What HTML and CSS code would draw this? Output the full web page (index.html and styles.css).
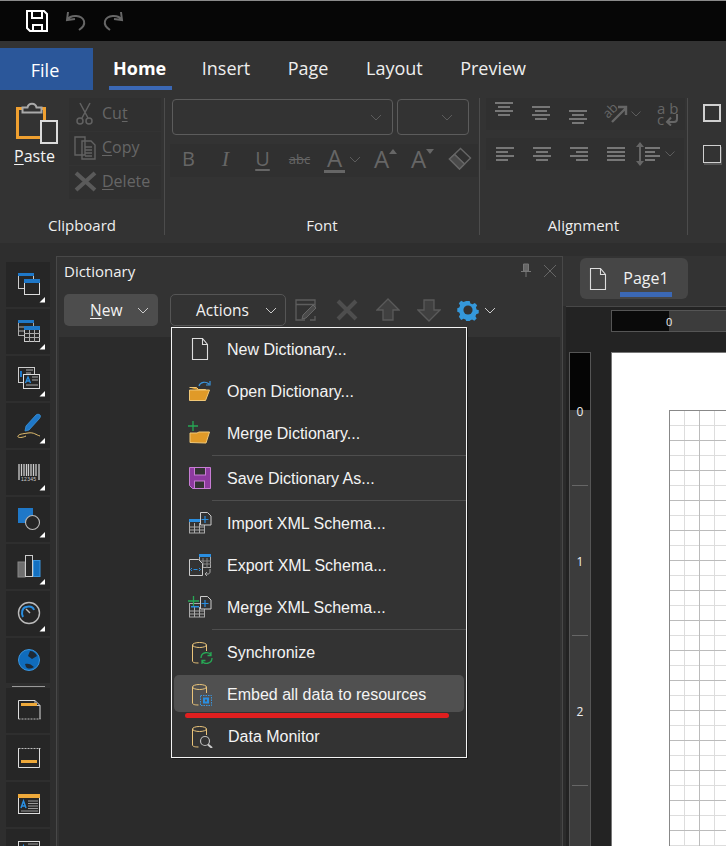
FILE: index.html
```html
<!DOCTYPE html>
<html lang="en">
<head>
<meta charset="utf-8">
<title>Dictionary Actions</title>
<link rel="stylesheet" href="styles.css">
</head>
<body>
<div class="app">
  <header class="titlebar">
    <svg width="130" height="40" viewBox="0 0 130 40" fill="none">
      <path d="M27 10h17l3 3v17H30l-3-3z" stroke="#fff" stroke-width="2"/>
      <path d="M32 10v7h10v-7M33 30v-6h9v6" stroke="#fff" stroke-width="2"/>
      <path d="M68 11l-1 8 8-1M67 19c4-6 15-5 17 1 1 4-1 6-5 9" stroke="#666" stroke-width="2"/>
      <path d="M121 11l1 8-8-1M122 19c-4-6-15-5-17 1-1 4 1 6 5 9" stroke="#666" stroke-width="2"/>
    </svg>
  </header>

  <nav class="tabs">
    <div class="tab-file">File</div>
    <div class="tab tab-active">Home</div>
    <div class="tab">Insert</div>
    <div class="tab">Page</div>
    <div class="tab">Layout</div>
    <div class="tab">Preview</div>
  </nav>

  <section class="ribbon">
    <div class="group group-clip">
      <div class="group-body clip-body">
        <div class="paste">
          <svg width="69" height="46" viewBox="0 0 69 46" fill="none">
            <path d="M17.5 9.5h27v29h-27z" stroke="#f0a030" stroke-width="3"/>
            <path d="M22.5 13.5v-5h5c1-5 8-5 9 0h5v5z" fill="#333" stroke="#aaa" stroke-width="2"/>
            <rect x="41" y="22" width="16" height="22" fill="#333" stroke="#ddd" stroke-width="2"/>
          </svg>
          <div class="paste-label"><u>P</u>aste</div>
        </div>
        <div class="clip-small">
          <div class="small-btn">
            <svg width="28" height="26" viewBox="0 0 28 26" fill="none" stroke="#626262" stroke-width="1.5"><path d="M9 3l8 15M19 3l-8 15"/><circle cx="9" cy="21" r="3"/><circle cx="18" cy="21" r="3"/></svg>
            <span>Cu<u>t</u></span>
          </div>
          <div class="small-btn">
            <svg width="28" height="26" viewBox="0 0 28 26" fill="none" stroke="#626262" stroke-width="1.4"><path d="M4 3h10v18H4zM11 7h9l4 4v14H11zM14 13h7M14 16h7M14 19h7M14 22h7"/></svg>
            <span><u>C</u>opy</span>
          </div>
          <div class="small-btn">
            <svg width="28" height="26" viewBox="0 0 28 26" fill="none" stroke="#5a5a5a" stroke-width="4"><path d="M5 5l19 17M24 5L5 22"/></svg>
            <span><u>D</u>elete</span>
          </div>
        </div>
      </div>
      <div class="group-label">Clipboard</div>
    </div>

    <div class="group group-font">
      <div class="group-body font-body">
        <div class="combos">
          <div class="combo combo-wide"><svg width="12" height="7" viewBox="0 0 12 7" fill="none" stroke="#5c5c5c"><path d="M1 1l5 5 5-5"/></svg></div>
          <div class="combo combo-narrow"><svg width="12" height="7" viewBox="0 0 12 7" fill="none" stroke="#5c5c5c"><path d="M1 1l5 5 5-5"/></svg></div>
        </div>
        <div class="font-row">
          <div class="font-btn fb-b">B</div>
          <div class="font-btn fb-i">I</div>
          <div class="font-btn fb-u">U</div>
          <div class="font-btn fb-s">abc</div>
          <div class="font-btn fb-color"><span class="color-a">A</span><svg width="12" height="7" viewBox="0 0 12 7" fill="none" stroke="#5c5c5c"><path d="M1 1l5 5 5-5"/></svg></div>
          <div class="font-btn fb-grow">A<svg width="8" height="5" viewBox="0 0 8 5"><path d="M0 5l4-5 4 5z" fill="#666"/></svg></div>
          <div class="font-btn fb-grow">A<svg width="8" height="5" viewBox="0 0 8 5"><path d="M0 0l4 5 4-5z" fill="#666"/></svg></div>
          <div class="font-btn">
            <svg width="24" height="24" viewBox="0 0 24 24" fill="none" stroke="#666" stroke-width="1.4"><path d="M1.500 12L12.500 1.500 22.500 11 11.500 22z"/><path d="M6.500 7.500l10 9.500" /><path d="M1.500 12l5-4.500 10 9.500-5 5z" fill="#4a4a4a"/></svg>
          </div>
        </div>
      </div>
      <div class="group-label">Font</div>
    </div>

    <div class="group group-align">
      <div class="group-body align-body">
        <div class="align-row">
          <div class="align-btn"><svg width="37" height="32" viewBox="0 0 37 32" fill="#777"><rect x="9" y="4" width="18" height="2"/><rect x="12" y="8" width="12" height="2"/><rect x="9" y="12" width="18" height="2"/><rect x="12" y="16" width="12" height="2"/></svg></div>
          <div class="align-btn"><svg width="37" height="32" viewBox="0 0 37 32" fill="#777"><rect x="9" y="8" width="18" height="2"/><rect x="12" y="12" width="12" height="2"/><rect x="9" y="16" width="18" height="2"/><rect x="12" y="20" width="12" height="2"/></svg></div>
          <div class="align-btn"><svg width="37" height="32" viewBox="0 0 37 32" fill="#777"><rect x="9" y="12" width="18" height="2"/><rect x="12" y="16" width="12" height="2"/><rect x="9" y="20" width="18" height="2"/><rect x="12" y="24" width="12" height="2"/></svg></div>
          <div class="align-btn align-orient">
            <svg width="37" height="32" viewBox="0 0 37 32" fill="none">
              <text transform="translate(11 21) rotate(-45)" class="orient-text">ab</text>
              <path d="M15 24L29 10M21 9h8v8" stroke="#666" stroke-width="2.400"/>
            </svg>
            <svg width="10" height="6" viewBox="0 0 10 6" fill="none" stroke="#5c5c5c"><path d="M.5.500l4.500 4.500 4.500-4.500"/></svg>
          </div>
          <div class="align-wrap">
            <span class="wrap-top">ab</span>
            <span class="wrap-bot">c
              <svg width="14" height="12" viewBox="0 0 14 12" fill="none" stroke="#666" stroke-width="2"><path d="M12 0v5c0 2-1 3-3 3H2M6 3.500L2 8l4 3.500"/></svg>
            </span>
          </div>
        </div>
        <div class="align-row align-row-2">
          <div class="align-btn"><svg width="37" height="32" viewBox="0 0 37 32" fill="#777"><rect x="10" y="9" width="18" height="2"/><rect x="10" y="13" width="12" height="2"/><rect x="10" y="17" width="18" height="2"/><rect x="10" y="21" width="12" height="2"/></svg></div>
          <div class="align-btn"><svg width="37" height="32" viewBox="0 0 37 32" fill="#777"><rect x="10" y="9" width="18" height="2"/><rect x="13" y="13" width="12" height="2"/><rect x="10" y="17" width="18" height="2"/><rect x="13" y="21" width="12" height="2"/></svg></div>
          <div class="align-btn"><svg width="37" height="32" viewBox="0 0 37 32" fill="#777"><rect x="10" y="9" width="18" height="2"/><rect x="16" y="13" width="12" height="2"/><rect x="10" y="17" width="18" height="2"/><rect x="16" y="21" width="12" height="2"/></svg></div>
          <div class="align-btn"><svg width="37" height="32" viewBox="0 0 37 32" fill="#777"><rect x="10" y="9" width="18" height="2"/><rect x="10" y="13" width="18" height="2"/><rect x="10" y="17" width="18" height="2"/><rect x="10" y="21" width="18" height="2"/></svg></div>
          <div class="align-spacing">
            <svg width="28" height="32" viewBox="0 0 28 32" fill="none"><path d="M6 5v22" stroke="#666" stroke-width="2"/><path d="M2 9l4-5 4 5zM2 23l4 5 4-5z" fill="#666"/><path d="M11 10h15M11 14h10M11 18h15M11 22h10" stroke="#777" stroke-width="2"/></svg>
            <svg width="10" height="6" viewBox="0 0 10 6" fill="none" stroke="#5c5c5c"><path d="M.5.500l4.500 4.500 4.500-4.500"/></svg>
          </div>
        </div>
      </div>
      <div class="group-label">Alignment</div>
    </div>

    <div class="group group-last">
      <div class="check check-thick"></div>
      <div class="check check-thin"></div>
    </div>
  </section>

  <main class="workspace">
    <aside class="toolbox">
      <div class="tool"><svg width="44" height="45" viewBox="0 0 44 45" fill="none"><rect x="12.500" y="11.500" width="15" height="15" stroke="#ccc"/><rect x="12" y="11" width="16" height="3" fill="#1f78c8"/><rect x="18.500" y="17.500" width="15" height="15" fill="#262626" stroke="#ddd"/><rect x="18" y="17" width="16" height="4" fill="#1f78c8"/><path d="M33.500 40.500H39V35z" fill="#fff"/></svg></div>
      <div class="tool"><svg width="44" height="45" viewBox="0 0 44 45" fill="none"><rect x="12.500" y="11.500" width="15" height="15" stroke="#aaa"/><rect x="12" y="11" width="16" height="3" fill="#1f78c8"/><path d="M12 18h6M12 22h6" stroke="#aaa"/><rect x="18.500" y="17.500" width="15" height="15" fill="#262626" stroke="#ccc"/><rect x="18" y="17" width="16" height="4" fill="#1f78c8"/><path d="M23.500 21v12M28.500 21v12M18 24.500h16M18 28.500h16" stroke="#aaa"/><path d="M33.500 40.500H39V35z" fill="#fff"/></svg></div>
      <div class="tool"><svg width="44" height="45" viewBox="0 0 44 45" fill="none"><rect x="12.500" y="11.500" width="16" height="15" stroke="#ccc"/><rect x="17.500" y="18.500" width="16" height="14" fill="#262626" stroke="#ddd"/><path d="M15 15v6" stroke="#1f78c8" stroke-width="2"/><path d="M19.500 27l2.500-6 2.500 6M20.500 25h3" stroke="#2a8ee0" stroke-width="1.300"/><path d="M20 14h7M20 17h5M26 21h6M26 24h6M20 29h12" stroke="#aaa"/><path d="M33.500 40.500H39V35z" fill="#fff"/></svg></div>
      <div class="tool"><svg width="44" height="45" viewBox="0 0 44 45" fill="none"><path d="M19 28l1-5 10-11c1-1 3-1 4 0s0 3-1 4L23 27z" fill="#1f78c8" stroke="#3a94dc" stroke-width=".8"/><path d="M34 33c-4-1-6-4-12-3s-9 1-10 3 4 2 8 0" stroke="#e4c070" stroke-width="1"/><path d="M33.500 40.500H39V35z" fill="#fff"/></svg></div>
      <div class="tool"><svg width="44" height="45" viewBox="0 0 44 45" fill="none"><path d="M13 14v16M15.500 14v12M18 14v12M20.500 14v12M22.500 14v12M25 14v12M27.500 14v12M30 14v12M33 14v16" stroke="#ccc" stroke-width="1.300"/><text x="15" y="31" class="bar-digits">12345</text><path d="M33.500 40.500H39V35z" fill="#fff"/></svg></div>
      <div class="tool"><svg width="44" height="45" viewBox="0 0 44 45" fill="none"><rect x="12" y="11" width="15" height="15" fill="#1f78c8"/><circle cx="26.500" cy="25.500" r="7" fill="#262626" stroke="#bbb" stroke-width="1.100"/><path d="M33.500 40.500H39V35z" fill="#fff"/></svg></div>
      <div class="tool"><svg width="44" height="45" viewBox="0 0 44 45" fill="none"><rect x="12" y="18" width="7" height="15" fill="#6e6e6e" stroke="#888"/><rect x="19.500" y="11.500" width="7" height="21" stroke="#ccc"/><rect x="27.500" y="16.500" width="6.500" height="16" fill="#1470c0" stroke="#3a94dc"/><path d="M33.500 40.500H39V35z" fill="#fff"/></svg></div>
      <div class="tool"><svg width="44" height="45" viewBox="0 0 44 45" fill="none"><circle cx="23" cy="22" r="10.500" stroke="#bbb" stroke-width="1.400"/><path d="M17 26c-2-4-1-9 3-10s7 0 8 3" stroke="#2a8ee0" stroke-width="2"/><path d="M20 18l4 4" stroke="#bbb" stroke-width="1.400"/><path d="M33.500 40.500H39V35z" fill="#fff"/></svg></div>
      <div class="tool"><svg width="44" height="45" viewBox="0 0 44 45" fill="none"><circle cx="23" cy="22" r="10.500" fill="#0f6cbd" stroke="#3a94dc"/><path d="M24 13c3 0 6 2 7 5l-5 3-4-3zM19 26c3-1 6 0 9 3-3 2-6 2-8 0z" fill="#1e2a36"/></svg></div>
      <div class="tool-sep"></div>
      <div class="tool"><svg width="44" height="45" viewBox="0 0 44 45" fill="none"><path d="M12.500 12.500h16.500l5 5V31" stroke="#ddd"/><path d="M12.500 12.500V31" stroke="#ddd"/><path d="M12.500 31h22" stroke="#bbb" stroke-dasharray="2 1"/><path d="M29 12.500v5h5" stroke="#ccc"/><rect x="15" y="15" width="16" height="3" fill="#eea93a"/></svg></div>
      <div class="tool"><svg width="44" height="45" viewBox="0 0 44 45" fill="none"><path d="M12.500 13v19.500h21V13" stroke="#ddd"/><path d="M12.500 13.500h22" stroke="#bbb" stroke-dasharray="2 1"/><rect x="15" y="25" width="16" height="3" fill="#eea93a"/></svg></div>
      <div class="tool"><svg width="44" height="45" viewBox="0 0 44 45" fill="none"><rect x="12.500" y="12.500" width="21" height="19" stroke="#ddd"/><rect x="12" y="12" width="22" height="4" fill="#eea93a"/><path d="M15 26l2.500-7 2.500 7M16 24h3" stroke="#2a8ee0" stroke-width="1.500"/><path d="M22 19h10M22 21.500h10M22 24h10M22 26.500h10M15 29h17" stroke="#999"/></svg></div>
      <div class="tool"><svg width="44" height="45" viewBox="0 0 44 45" fill="none"><rect x="12.500" y="12.500" width="21" height="19" stroke="#ddd"/><path d="M15 24l2.500-7 2.500 7M16 22h3" stroke="#2a8ee0" stroke-width="1.500"/><path d="M22 15h10M22 18h10M22 21h10M15 27h17" stroke="#999"/></svg></div>
    </aside>

    <section class="panel">
      <div class="panel-top">
        <div class="panel-title">
          <span>Dictionary</span>
          <svg class="pin" width="12" height="14" viewBox="0 0 12 14" fill="none"><path d="M3.500 1h5v7h-5z" fill="#666" stroke="#777"/><path d="M1 8.500h10M6 9v5" stroke="#777"/></svg>
          <svg class="panel-close" width="14" height="14" viewBox="0 0 14 14" fill="none" stroke="#666"><path d="M1 1l12 12M13 1L1 13"/></svg>
        </div>
        <div class="panel-tools">
          <div class="btn btn-new"><span><u>N</u>ew</span><svg width="12" height="7" viewBox="0 0 12 7" fill="none" stroke="#ccc"><path d="M1 1l5 5 5-5"/></svg></div>
          <div class="btn btn-actions"><span>Actions</span><svg width="12" height="7" viewBox="0 0 12 7" fill="none" stroke="#ccc"><path d="M1 1l5 5 5-5"/></svg></div>
          <div class="panel-icons">
            <svg width="24" height="24" viewBox="0 0 24 24" fill="none"><path d="M21 10V2H2v20h9M21 18v4h-5M2 6.500h19" stroke="#5e5e5e" stroke-width="1.300"/><path d="M8 21l1-4L19 7l3 3-10 10z" fill="#4a4a4a" stroke="#666"/></svg>
            <svg width="24" height="24" viewBox="0 0 24 24" fill="none" stroke="#4e4e4e" stroke-width="4"><path d="M3 3l18 18M21 3L3 21"/></svg>
            <svg width="24" height="24" viewBox="0 0 24 24"><path d="M12 1l11 11h-6v10H7V12H1z" fill="#404040" stroke="#5a5a5a" stroke-width="1.300"/></svg>
            <svg width="24" height="24" viewBox="0 0 24 24"><path d="M12 23l11-11h-6V2H7v10H1z" fill="#404040" stroke="#5a5a5a" stroke-width="1.300"/></svg>
            <svg class="gear" width="22" height="22" viewBox="0 0 24 24"><path d="M10 1h4l1 3 2.500 1 2.800-1.500 2.800 2.800-1.500 2.800 1 2.500 2.400.4v4l-3 1-1 2.500 1.500 2.800-2.800 2.800-2.800-1.500-2.500 1-.4 1.400h-4l-1-2.400-2.500-1-2.800 1.500L.9 20.300l1.500-2.800-1-2.500L-1 14v-4l2.400-1 1-2.500L.9 3.700 3.700.9l2.800 1.500L9 1.400z" transform="translate(1.200 1.200) scale(.9)" fill="#3498db"/><circle cx="12" cy="12" r="5" fill="#333"/></svg>
            <svg class="gear-chev" width="12" height="7" viewBox="0 0 12 7" fill="none" stroke="#ccc"><path d="M1 1l5 5 5-5"/></svg>
          </div>
        </div>
      </div>
      <div class="panel-body"></div>

      <div class="menu">
        <div class="menu-item">
          <svg width="26" height="24" viewBox="0 0 26 24" fill="none"><path d="M4.500 1.500h10l5 6v15h-15zM14.500 1.500v6h5" stroke="#ddd" stroke-width="1.100"/></svg>
          <span>New Dictionary...</span>
        </div>
        <div class="menu-item">
          <svg width="26" height="24" viewBox="0 0 26 24" fill="none"><path d="M1.500 8.500h7l2 2h7v3" fill="#e09a28" stroke="#f0c878"/><path d="M1.500 21.500V11h20l-4 10.500z" fill="#e09a28" stroke="#f0c878"/><path d="M11 7c1-4 7-5 10-2M22 2v4h-4" stroke="#3a94dc" stroke-width="1.200"/></svg>
          <span>Open Dictionary...</span>
        </div>
        <div class="menu-item">
          <svg width="26" height="24" viewBox="0 0 26 24" fill="none"><path d="M2 21.500V12h7l2-1h10.500L18 22z" fill="#e09a28" stroke="#f0c878"/><path d="M5 0v10M0 5h10" stroke="#27a855" stroke-width="1.300"/></svg>
          <span>Merge Dictionary...</span>
        </div>
        <div class="menu-sep"></div>
        <div class="menu-item">
          <svg width="26" height="24" viewBox="0 0 26 24"><path d="M1.500 1.500h21v21h-18l-3-3z" fill="#8e3aa0" stroke="#c77dd4"/><rect x="6.500" y="1.500" width="11" height="7.500" fill="#333" stroke="#c77dd4"/><rect x="6.500" y="15" width="10" height="7.500" fill="#333" stroke="#c77dd4"/></svg>
          <span>Save Dictionary As...</span>
        </div>
        <div class="menu-sep"></div>
        <div class="menu-item">
          <svg width="26" height="24" viewBox="0 0 26 24" fill="none"><rect x="1.500" y="8.500" width="15" height="13.500" stroke="#aaa"/><rect x="1" y="8" width="11" height="3" fill="#2a8ee0"/><path d="M1 16h15M1 19h15M6.500 12v10M11.500 12v10" stroke="#aaa"/><path d="M12.500 1.500h7l3.500 3.500v9h-10.500z" fill="#333" stroke="#ccc"/><path d="M17 5v7M13.500 8.500h7" stroke="#2a8ee0" stroke-width="1.200"/></svg>
          <span>Import XML Schema...</span>
        </div>
        <div class="menu-item">
          <svg width="26" height="24" viewBox="0 0 26 24" fill="none"><rect x="11.500" y="1.500" width="11" height="13" stroke="#aaa"/><rect x="11" y="1" width="12" height="3" fill="#2a8ee0"/><path d="M15 5v10M19 5v10M12 8h11M12 11h11" stroke="#888"/><path d="M1.500 6.500h9l4 4v12h-13z" fill="#333" stroke="#ccc"/><path d="M4 15l-1.500 1.500L4 18M11 15l1.500 1.500L11 18M5.500 16.500h4" stroke="#2a8ee0"/><path d="M22 16v3c0 1-1 2-2 2h-3M19 19l-2 2 2 2" stroke="#aaa"/></svg>
          <span>Export XML Schema...</span>
        </div>
        <div class="menu-item">
          <svg width="26" height="24" viewBox="0 0 26 24" fill="none"><rect x="1.500" y="8.500" width="15" height="13.500" stroke="#aaa"/><path d="M1 16h15M1 19h15M6.500 12v10M11.500 12v10" stroke="#aaa"/><rect x="3" y="11" width="8" height="1.500" fill="#2a8ee0"/><path d="M12.500 1.500h7l3.500 3.500v9h-10.500z" fill="#333" stroke="#ccc"/><path d="M17 5v7M13.500 8.500h7" stroke="#2a8ee0" stroke-width="1.200"/><path d="M5.500 1v10M0 6h11" stroke="#27a855" stroke-width="1.300"/></svg>
          <span>Merge XML Schema...</span>
        </div>
        <div class="menu-sep"></div>
        <div class="menu-item">
          <svg width="26" height="24" viewBox="0 0 26 24" fill="none"><ellipse cx="11.500" cy="5" rx="7" ry="2.500" stroke="#eac47a"/><path d="M4.500 5v16c0 1 1 2 6 2M18.500 5v6" stroke="#eac47a"/><path d="M13 18c0-6 8-7 10-3M23 12v3.500h-3.500M24 18c0 6-8 7-10 3M14 24v-3.500h3.500" stroke="#27a855" stroke-width="1.300"/></svg>
          <span>Synchronize</span>
        </div>
        <div class="menu-item menu-item-hot">
          <svg width="26" height="24" viewBox="0 0 26 24" fill="none"><ellipse cx="11.500" cy="5" rx="7" ry="2.500" stroke="#eac47a"/><path d="M4.500 5v16c0 1 1 2 6 2M18.500 5v6" stroke="#eac47a"/><rect x="12.500" y="13.500" width="11" height="10" stroke="#3a94dc" stroke-dasharray="1.500 1"/><rect x="15" y="15.500" width="6" height="6" fill="#2a8ee0"/><rect x="17" y="17.500" width="2" height="2" fill="#505050"/></svg>
          <span>Embed all data to resources</span>
        </div>
        <div class="menu-item menu-item-shift">
          <svg width="26" height="24" viewBox="0 0 26 24" fill="none"><ellipse cx="11.500" cy="5" rx="7" ry="2.500" stroke="#eac47a"/><path d="M4.500 5v16c0 1 1 2 6 2M18.500 5v6" stroke="#eac47a"/><circle cx="17" cy="17" r="4.500" fill="#333" stroke="#bbb" stroke-width="1.200"/><path d="M20 20.500l4 3.500" stroke="#ccc" stroke-width="2"/></svg>
          <span>Data Monitor</span>
        </div>
      </div>
      <div class="red-mark"></div>
    </section>

    <section class="doc">
      <div class="doc-head">
        <div class="page-tab">
          <svg width="18" height="24" viewBox="0 0 18 24" fill="none"><path d="M1.500 1.500h10l5 6v15h-15zM11.500 1.500v6h5" stroke="#ddd" stroke-width="1.100"/></svg>
          <span class="page-tab-name">Page1</span>
        </div>
      </div>
      <div class="canvas">
        <div class="hruler"><div class="hruler-black"></div><span class="hruler-zero">0</span></div>
        <div class="vruler">
          <div class="vruler-black"></div>
          <div class="vcell"><span>0</span></div><div class="vcell vcell-blank"></div>
          <div class="vcell"><span>1</span></div><div class="vcell vcell-blank"></div>
          <div class="vcell"><span>2</span></div><div class="vcell vcell-blank"></div>
        </div>
        <div class="page"><div class="sheet"></div></div>
      </div>
    </section>
  </main>
</div>
</body>
</html>
```

FILE: styles.css
```css
* { box-sizing: border-box; }
html, body { margin: 0; padding: 0; }
body { background: #2e2e2e; font-family: "Open Sans", "Liberation Sans", sans-serif; color: #f2f2f2; }
svg { display: block; flex: none; }
u { text-underline-offset: 2px; }

.app { width: 726px; height: 846px; overflow: hidden; display: flex; flex-direction: column; }

.titlebar { height: 41px; flex: none; background: #060606; border-top: 1px solid #8a8a8a; }

.tabs { height: 49px; flex: none; background: #333; padding-top: 7px; display: flex; align-items: stretch; }
.tab-file { width: 93px; background: #2b579a; display: flex; align-items: center; justify-content: center; font-size: 18px; padding: 2px 3px 0 0; color: #fff; }
.tab { font-size: 18px; line-height: 24px; margin-left: 37.5px; padding-top: 8px; color: #eee; white-space: nowrap; }
.tab-active { font-weight: 700; margin-left: 16px; padding: 8px 6px 0 4px; margin-right: -8px; height: 42px; border-bottom: 4px solid #3b68b5; color: #fff; }

.ribbon { height: 153px; flex: none; background: #333; padding: 8px 0 8px; display: flex; }
.group { display: flex; flex-direction: column; border-right: 1px solid #4c4c4c; }
.group-body { flex: 1; min-height: 0; }
.group-label { height: 20px; text-align: center; font-size: 15px; line-height: 20px; color: #eee; }
.group-clip { width: 165px; }
.group-font { width: 315px; }
.group-align { width: 208px; }
.group-last { flex: 1; border-right: 0; padding: 6px 0 0 15px; gap: 23px; }

.clip-body { display: flex; }
.paste { width: 69px; padding-top: 1px; }
.paste-label { font-size: 16px; line-height: 20px; text-align: center; color: #f4f4f4; margin-top: 1px; }
.clip-small { width: 92px; display: flex; flex-direction: column; gap: 1px; }
.small-btn { height: 33px; background: #303030; display: flex; align-items: center; gap: 3px; padding: 0 0 4px 2px; color: #666; font-size: 16px; }

.font-body { padding: 1px 0 0 7px; }
.combos { display: flex; gap: 4px; }
.combo { height: 36px; border: 1px solid #5c5c5c; border-radius: 4px; display: flex; align-items: center; justify-content: flex-end; padding-right: 10px; }
.combo-wide { width: 221px; }
.combo-narrow { width: 72px; padding-right: 15px; }
.font-row { display: flex; margin: 9px 0 0 -2px; }
.font-btn { width: 37px; height: 33px; background: #303030; display: flex; align-items: center; justify-content: center; color: #666; font-size: 20px; padding-bottom: 4px; }
.fb-i { font-style: italic; font-family: "Liberation Serif", serif; font-size: 22px; }
.fb-u { text-decoration: underline; text-underline-offset: 3px; }
.fb-s { font-size: 13px; text-decoration: line-through; }
.fb-color { width: 49px; gap: 4px; font-size: 24px; padding-bottom: 2px; }
.color-a { border-bottom: 3px solid #666; line-height: 24px; height: 27px; padding: 0 3px; }
.fb-grow { font-size: 24px; align-items: center; padding-right: 6px; }
.fb-grow svg { margin: -14px -6px 0 0; }

.align-body { padding: 0 0 0 6px; }
.align-row { display: flex; height: 32px; }
.align-row-2 { margin-top: 8px; }
.align-btn { width: 37px; height: 32px; background: #303030; }
.align-orient { width: 50px; display: flex; align-items: center; }
.align-orient svg + svg { margin-left: -3px; }
.orient-text { font: 13px "Open Sans", sans-serif; fill: #666; }
.align-wrap { width: 38px; height: 32px; color: #666; font-size: 15px; line-height: 13px; padding: 4px 0 0 10px; background: #303030; }
.wrap-top { display: block; letter-spacing: 4px; }
.wrap-bot { display: flex; gap: 1px; align-items: center; margin-top: -2px; }
.align-spacing { width: 50px; display: flex; align-items: center; background: #303030; }
.align-spacing svg + svg { margin-left: 3px; }

.check { width: 18px; height: 18px; flex: none; border: 2px solid #d0d0d0; }
.check-thin { border-width: 1px; box-shadow: 1px 2px 0 #555; }

.workspace { flex: 1; min-height: 0; display: flex; align-items: flex-start; padding-top: 13px; }

.toolbox { width: 44px; margin: 6px 6px 0 6px; flex: none; display: flex; flex-direction: column; gap: 2px; }
.tool { height: 45px; flex: none; background: #262626; }
.tool-sep { height: 1px; margin: 1px 5px -1px 6px; background: #999; flex: none; }
.bar-digits { font: 5px "Liberation Sans", sans-serif; fill: #ccc; letter-spacing: .3px; }

.panel { position: relative; width: 507px; height: 590px; flex: none; border: 1px solid #484848; border-width: 1px 1px 0 1px; background: #333; padding: 0 2px 0 0; display: flex; flex-direction: column; }
.panel-top { height: 80px; flex: none; }
.panel-title { height: 28px; display: flex; align-items: center; padding: 0 0 0 7px; font-size: 15px; color: #f0f0f0; }
.panel-title span { flex: 1; }
.pin { margin-right: 11px; margin-top: -2px; }
.panel-close { margin-right: 3px; }
.panel-tools { display: flex; padding: 9px 0 0 7px; align-items: center; }
.btn { height: 32px; border-radius: 5px; display: flex; align-items: center; justify-content: space-between; font-size: 15.5px; }
.btn-new { width: 94px; background: #4d4d4d; padding: 0 9px 0 26px; }
.btn-actions { width: 116px; margin-left: 12px; border: 1px solid #555; padding: 0 8px 0 25px; }
.panel-icons { display: flex; align-items: center; gap: 17px; margin-left: 8px; }
.gear { margin-left: -1px; }
.gear-chev { margin-left: -12px; }
.panel-body { flex: 1; margin-left: 2px; background: #2b2b2b; }

.menu { position: absolute; left: 114px; top: 70px; width: 296px; height: 431px; background: #333; border: 1px solid #f4f4f4; box-shadow: 1px 1px 0 #1a1a1a; font-family: "Liberation Sans", sans-serif; font-size: 16px; }
.menu-item { height: 42px; display: flex; align-items: center; padding-left: 16px; gap: 13px; color: #f4f4f4; position: relative; white-space: nowrap; }
.menu-item > * { position: relative; }
.menu-item span { margin-top: 2px; }
.menu-item-hot::before { content: ""; position: absolute; left: 2px; right: 2px; top: 2px; bottom: 3px; border-radius: 5px; background: #505050; }
.menu-item-shift { gap: 14px; }
.menu-sep { height: 3px; padding-top: 1px; margin-left: 40px; }
.menu-sep::before { content: ""; display: block; height: 1px; background: #4e4e4e; }
.red-mark { position: absolute; left: 128px; top: 456px; width: 264px; height: 5px; border-radius: 3px; background: #e01f1f; }

.doc { flex: 1; min-width: 0; height: 590px; background: #2b2b2b; }
.doc-head { height: 50px; padding: 2px 0 0 17px; background: #333; }
.page-tab { width: 108px; height: 41px; background: #464646; border-radius: 6px; display: flex; align-items: center; padding-left: 9px; gap: 17px; }
.page-tab-name { font-size: 16px; line-height: 22px; border-bottom: 5px solid #3b68b5; padding: 0 3px; margin: 6px 0 0 -4px; height: 30px; width: 52px; text-align: center; color: #f0f0f0; }
.canvas { height: 540px; margin-left: 3px; background: #232323; border-top: 1px solid #484848; padding: 3px 0 0 3px; display: grid; grid-template-columns: 22px 1fr; grid-template-rows: 22px 1fr; column-gap: 20px; row-gap: 20px; }
.hruler { grid-column: 2; grid-row: 1; margin-right: -20px; background: #3c3c3c; border: 1px solid #555; display: flex; align-items: center; font-size: 11px; color: #f0f0f0; }
.hruler-black { width: 57px; align-self: stretch; background: #0a0a0a; }
.hruler-zero { margin-left: -3px; }
.vruler { grid-column: 1; grid-row: 2; background: #3c3c3c; border: 1px solid #555; border-bottom: 0; font-size: 12px; color: #f0f0f0; }
.vruler-black { height: 57px; background: #050505; }
.vcell { height: 75px; display: flow-root; margin: 0 2px; text-align: center; line-height: 14px; }
.vcell span { display: block; margin-top: -5px; }
.vcell-blank { border-top: 1px solid #666; }
.page { grid-column: 2; grid-row: 2; background: #fff; border-left: 1px solid #777; border-top: 1px solid #777; padding: 57px 0 0 57px; margin-right: -20px; }
.sheet { height: 500px; margin-right: -20px; border-left: 1px solid #888; border-top: 1px solid #888;
  background-color: #fff;
  background-image:
    linear-gradient(to right, #bbb 1px, transparent 1px),
    linear-gradient(to bottom, #bbb 1px, transparent 1px),
    linear-gradient(to right, #ddd 1px, transparent 1px),
    linear-gradient(to bottom, #ddd 1px, transparent 1px);
  background-size: 30px 30px, 30px 30px, 15px 15px, 15px 15px;
  background-position: -1px -1px;
}
```
